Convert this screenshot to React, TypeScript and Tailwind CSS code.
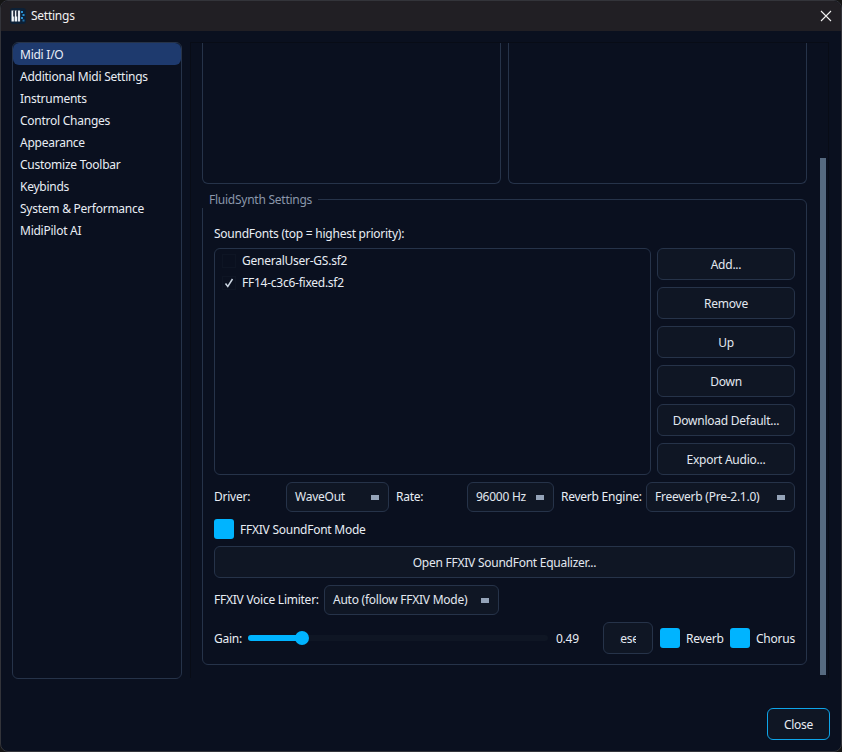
import React from "react";

const nav = ["Midi I/O", "Additional Midi Settings", "Instruments", "Control Changes", "Appearance", "Customize Toolbar", "Keybinds", "System & Performance", "MidiPilot AI"];
const btn = "flex items-center justify-center rounded-[6px] border border-[#263349] bg-[#0f1624] text-[#e2e8f0] pt-[1px]";

function Combo({ label, w }: { label: string; w: string }) {
  return (
    <div className={`${w} h-[30px] shrink-0 flex items-center justify-between pl-[8px] pr-[9px] rounded-[6px] border border-[#263349] bg-[#0f1624] text-[#e2e8f0]`}>
      <span>{label}</span>
      <span className="w-[8px] h-[5px] bg-[#94a3b8]" />
    </div>
  );
}

function Check() {
  return <span className="block w-[20px] h-[20px] shrink-0 rounded-[3px] bg-[#00b4ff]" />;
}

export default function App() {
  return (
    <div className="w-[842px] h-[752px] bg-[#151515] overflow-hidden" style={{ fontFamily: '"Noto Sans", sans-serif' }}>
      <div className="w-[842px] h-[752px] flex flex-col rounded-[8px] border border-[#33343a] overflow-hidden bg-[#0a101f] text-[12px] tracking-[-0.25px] leading-[16px] text-[#e8edf4]">
        <div className="h-[30px] shrink-0 flex items-center bg-[#211f24] pl-[9px] pr-[9px]">
          <svg width="16" height="16" viewBox="0 0 16 16" className="shrink-0">
            <rect width="16" height="16" rx="3" fill="#0c2036" />
            <rect x="1.5" y="2.5" width="2.4" height="11" fill="#f1f5f9" />
            <rect x="4.6" y="2.5" width="2.4" height="11" fill="#f1f5f9" />
            <rect x="7.7" y="2.5" width="2.4" height="11" fill="#e2e8f0" />
            <rect x="3.2" y="2.5" width="1.6" height="6" fill="#1e293b" />
            <rect x="6.3" y="2.5" width="1.6" height="6" fill="#1e293b" />
            <rect x="11" y="3" width="2" height="2" fill="#2a8fd0" />
            <rect x="12.5" y="6" width="2" height="2" fill="#2a8fd0" />
            <rect x="11" y="9" width="2" height="2" fill="#2a8fd0" />
            <rect x="12.5" y="11.5" width="2" height="2" fill="#1f6ea6" />
          </svg>
          <span className="ml-[5px] text-[#f1f1f1]">Settings</span>
          <svg width="12" height="12" viewBox="0 0 12 12" className="ml-auto" stroke="#f0f0f0" strokeWidth="1.1">
            <path d="M1 1 L11 11 M11 1 L1 11" />
          </svg>
        </div>

        <div className="flex-1 flex flex-col pl-[11px] pr-[11px] pt-[11px]">
          <div className="flex gap-[8px] h-[637px]">
            <div className="w-[170px] shrink-0 rounded-[6px] border border-[#263349] bg-[#0a101f]">
              {nav.map((n, i) => (
                <div key={n} className={`h-[22px] flex items-center pl-[7px] pt-[2px] ${i === 0 ? "bg-[#1e3a6e] rounded-[6px] text-[#e8eef8]" : ""}`}>
                  {n}
                </div>
              ))}
            </div>

            <div className="w-[639px] shrink-0 flex border border-[#080c16] border-b-0 h-[636px]">
              <div className="w-[617px] shrink-0 pl-[11px]">
                <div className="flex gap-[7px]">
                  <div className="w-[299px] h-[141px] rounded-b-[6px] border border-t-0 border-[#263349]" />
                  <div className="w-[299px] h-[141px] rounded-b-[6px] border border-t-0 border-[#263349]" />
                </div>

                <div className="relative mt-[15px] w-[605px] h-[466px] rounded-[6px] border border-[#263349] pl-[11px] pr-[11px] pt-[26px]">
                  <span className="absolute -left-[1px] -top-[8px] w-[116px] h-[16px] bg-[#0a101f] pl-[7px] text-[#8a97aa]">FluidSynth Settings</span>
                  <div className="h-[16px] mb-[6px]">SoundFonts (top = highest priority):</div>

                  <div className="flex gap-[6px]">
                    <div className="w-[437px] h-[227px] rounded-[6px] border border-[#263349] pt-[1px]">
                      <div className="h-[22px] flex items-center">
                        <span className="w-[7px]" />
                        <span className="w-[14px] h-[14px] border border-[#0e1524]" />
                        <span className="w-[6px]" />
                        <span>GeneralUser-GS.sf2</span>
                      </div>
                      <div className="h-[22px] flex items-center">
                        <span className="w-[7px]" />
                        <span className="w-[14px] h-[14px] border border-[#0e1524] flex items-center justify-center">
                          <svg width="10" height="10" viewBox="0 0 10 10" fill="none" stroke="#cbd5e1" strokeWidth="1.5">
                            <path d="M1.5 5.5 L3.8 8.5 L8.5 1" />
                          </svg>
                        </span>
                        <span className="w-[6px]" />
                        <span>FF14-c3c6-fixed.sf2</span>
                      </div>
                    </div>
                    <div className="w-[138px] flex flex-col gap-[7px]">
                      {["Add...", "Remove", "Up", "Down", "Download Default...", "Export Audio..."].map((b) => (
                        <div key={b} className={`${btn} h-[32px]`}>{b}</div>
                      ))}
                    </div>
                  </div>

                  <div className="flex items-center mt-[7px] h-[30px]">
                    <span className="w-[72px] shrink-0">Driver:</span>
                    <Combo label="WaveOut" w="w-[103px]" />
                    <span className="w-[78px] shrink-0 pl-[7px]">Rate:</span>
                    <Combo label="96000 Hz" w="w-[87px]" />
                    <span className="w-[92px] shrink-0 pl-[7px]">Reverb Engine:</span>
                    <Combo label="Freeverb (Pre-2.1.0)" w="w-[149px]" />
                  </div>

                  <div className="flex items-center gap-[6px] mt-[7px] h-[20px]">
                    <Check />
                    <span className="pt-[1px]">FFXIV SoundFont Mode</span>
                  </div>

                  <div className={`${btn} h-[32px] mt-[7px]`}>Open FFXIV SoundFont Equalizer...</div>

                  <div className="flex items-center mt-[7px] h-[30px]">
                    <span className="w-[110px] shrink-0">FFXIV Voice Limiter:</span>
                    <Combo label="Auto (follow FFXIV Mode)" w="w-[175px]" />
                  </div>

                  <div className="flex items-center mt-[7px] h-[32px]">
                    <span className="w-[34px] shrink-0 pt-[1px]">Gain:</span>
                    <div className="relative w-[300px] h-[6px] rounded-full bg-[#0f1624]">
                      <div className="w-[54px] h-[6px] rounded-full bg-[#00b4ff]" />
                      <span className="absolute left-[47px] -top-[4px] w-[14px] h-[14px] rounded-full bg-[#00b4ff]" />
                    </div>
                    <span className="w-[55px] shrink-0 pl-[8px] pt-[1px]">0.49</span>
                    <div className={`${btn} w-[50px] h-[32px]`}>
                      <span className="w-[16px] overflow-hidden flex justify-center"><span className="shrink-0">Reset</span></span>
                    </div>
                    <span className="ml-[7px] block"><Check /></span>
                    <span className="ml-[6px] w-[44px] shrink-0 pt-[1px]">Reverb</span>
                    <Check />
                    <span className="ml-[6px] pt-[1px]">Chorus</span>
                  </div>
                </div>
              </div>
              <div className="ml-[12px] w-[6px]">
                <div className="mt-[115px] h-[517px] bg-[#566a80]" />
              </div>
            </div>
          </div>

          <div className="flex justify-end mt-[29px]">
            <div className="w-[63px] h-[32px] flex items-center justify-center rounded-[6px] border border-[#0ea5e9] bg-[#0f1624] pt-[1px]">Close</div>
          </div>
        </div>
      </div>
    </div>
  );
}
